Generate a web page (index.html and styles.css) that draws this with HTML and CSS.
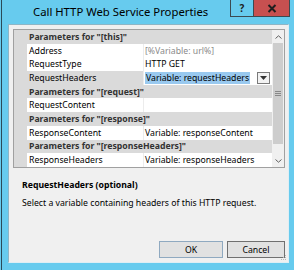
FILE: index.html
```html
<!DOCTYPE html>
<html>
<head>
<meta charset="utf-8">
<link rel="stylesheet" href="styles.css">
</head>
<body>
<div class="window">
  <div class="titlebar">
    <div class="title">Call HTTP Web Service Properties</div>
    <div class="caption-btns">
      <div class="cbtn help">?</div>
      <div class="cbtn close">
        <svg width="10" height="9" viewBox="0 0 10 9"><path d="M1.5 1 L8.5 8 M8.5 1 L1.5 8" stroke="#1e1e1e" stroke-width="2"/></svg>
      </div>
    </div>
  </div>
  <div class="client">
    <div class="grid">
      <div class="rows">
        <div class="row cat"><span class="gut"></span><span class="cat-text">Parameters for "[this]"</span></div>
        <div class="row"><span class="gut"></span><span class="name">Address</span><span class="val dim">[%Variable: url%]</span></div>
        <div class="row"><span class="gut"></span><span class="name">RequestType</span><span class="val">HTTP GET</span></div>
        <div class="row sel"><span class="gut"></span><span class="name">RequestHeaders</span><span class="val"><span class="hl">Variable: requestHeaders</span><span class="dd"><svg width="7" height="4" viewBox="0 0 7 4"><path d="M0 0 H7 L3.5 4 Z" fill="#333"/></svg></span></span></div>
        <div class="row cat"><span class="gut"></span><span class="cat-text">Parameters for "[request]"</span></div>
        <div class="row"><span class="gut"></span><span class="name">RequestContent</span><span class="val"></span></div>
        <div class="row cat"><span class="gut"></span><span class="cat-text">Parameters for "[response]"</span></div>
        <div class="row"><span class="gut"></span><span class="name">ResponseContent</span><span class="val">Variable: responseContent</span></div>
        <div class="row cat"><span class="gut"></span><span class="cat-text">Parameters for "[responseHeaders]"</span></div>
        <div class="row"><span class="gut"></span><span class="name">ResponseHeaders</span><span class="val">Variable: responseHeaders</span></div>
      </div>
      <div class="scrollbar">
        <div class="sb-arrow"><svg width="7" height="4" viewBox="0 0 7 4"><path d="M0.5 3.5 L3.5 0.8 L6.5 3.5" fill="none" stroke="#606060" stroke-width="1"/></svg></div>
        <div class="sb-thumb"><div class="grip"></div></div>
        <div class="sb-track"></div>
        <div class="sb-arrow"><svg width="7" height="4" viewBox="0 0 7 4"><path d="M0.5 0.5 L3.5 3.2 L6.5 0.5" fill="none" stroke="#606060" stroke-width="1"/></svg></div>
      </div>
    </div>
    <div class="desc">
      <div class="desc-title">RequestHeaders (optional)</div>
      <div class="desc-text">Select a variable containing headers of this HTTP request.</div>
    </div>
    <div class="buttons">
      <div class="btn ok">OK</div>
      <div class="btn cancel">Cancel</div>
    </div>
    <div class="sizegrip">
      <svg width="6" height="6" viewBox="0 0 6 6"><g fill="#b8b8b8"><rect x="4" y="0" width="1" height="1"/><rect x="2" y="2" width="1" height="1"/><rect x="4" y="2" width="1" height="1"/><rect x="0" y="4" width="1" height="1"/><rect x="2" y="4" width="1" height="1"/><rect x="4" y="4" width="1" height="1"/></g></svg>
    </div>
  </div>
</div>
</body>
</html>
```
FILE: styles.css
```css
html, body {
  margin: 0;
  padding: 0;
}
body {
  width: 294px;
  height: 270px;
  overflow: hidden;
  font-family: "Noto Sans", "Open Sans", sans-serif;
  color: #000;
}
.window {
  width: 294px;
  height: 270px;
  background: linear-gradient(to right, #67cbee 1px, #2a4a58 1px, #2a4a58 2px, #67cbee 2px);
  display: flex;
  flex-direction: column;
}
.titlebar {
  height: 24px;
  display: flex;
  align-items: flex-start;
}
.title {
  font-size: 11.3px;
  line-height: 24px;
  padding-left: 33px;
  white-space: nowrap;
}
.caption-btns {
  margin-left: auto;
  margin-right: 4px;
  display: flex;
}
.cbtn {
  height: 16px;
  border: 1px solid #3b4a52;
  border-top: none;
  display: flex;
  align-items: center;
  justify-content: center;
}
.help {
  width: 22px;
  border-right: none;
  background: #67cbee;
  font-weight: bold;
  font-size: 10px;
  color: #1e1e1e;
}
.close {
  width: 35px;
  background: #c75050;
}
.client {
  margin-left: 8px;
  width: 279px;
  height: 237px;
  background: #f0f0f0;
  border: 1px solid #8eb6c6;
  border-bottom-color: #dfeef4;
  border-right-color: #dfeef4;
  position: relative;
  display: flex;
  flex-direction: column;
}
.grid {
  margin: 4px 0 0 4px;
  width: 270px;
  height: 137px;
  border: 1px solid #a0a0a0;
  background: #fff;
  display: flex;
}
.rows {
  width: 258px;
  display: flex;
  flex-direction: column;
}
.row {
  height: 13.7px;
  display: flex;
  align-items: center;
  font-size: 8.7px;
  white-space: nowrap;
  overflow: hidden;
}
.gut {
  width: 13px;
  align-self: stretch;
  background: #dadada;
  flex: none;
}
.name {
  width: 114px;
  padding-left: 2px;
  align-self: stretch;
  display: flex;
  align-items: center;
  border-right: 1px solid #ececec;
  flex: none;
}
.val {
  flex: 1;
  padding-left: 1px;
  align-self: stretch;
  display: flex;
  align-items: center;
}
.dim {
  color: #8a8a8a;
}
.cat {
  background: #dadada;
  font-weight: bold;
  color: #333;
}
.cat-text {
  padding-left: 2px;
}
.sel .name {
  background: #dadada;
}
.hl {
  background: #99c9ef;
  padding: 0 1px;
  line-height: 12px;
}
.dd {
  margin-left: auto;
  margin-right: 2px;
  width: 11px;
  height: 10px;
  border: 1px solid #7a7a7a;
  background: #f2f2f2;
  display: flex;
  align-items: center;
  justify-content: center;
}
.scrollbar {
  width: 12px;
  background: #f0f0f0;
  display: flex;
  flex-direction: column;
}
.sb-arrow {
  height: 13px;
  display: flex;
  align-items: center;
  justify-content: center;
  background: #f0f0f0;
}
.sb-thumb {
  height: 101px;
  margin: 0 1px;
  background: #cdcdcd;
  display: flex;
  align-items: center;
  justify-content: center;
}
.grip {
  width: 6px;
  height: 5px;
  background: repeating-linear-gradient(to bottom, #888 0, #888 1px, transparent 1px, transparent 2px);
}
.sb-track {
  flex: 1;
}
.desc {
  padding: 10px 0 0 13px;
  height: 52px;
}
.desc-title {
  font-size: 8.7px;
  font-weight: bold;
  line-height: 14px;
}
.desc-text {
  font-size: 8.7px;
  line-height: 14px;
  margin-top: 4px;
}
.buttons {
  display: flex;
  justify-content: flex-end;
  gap: 4px;
  padding-right: 3px;
  margin-top: 11px;
}
.btn {
  height: 15px;
  border: 1px solid #adadad;
  background: #e1e1e1;
  font-size: 8.7px;
  display: flex;
  align-items: center;
  justify-content: center;
}
.ok {
  width: 62px;
  border-color: #8fa9c0;
}
.cancel {
  width: 56px;
  border-color: #707070;
}
.sizegrip {
  position: absolute;
  right: 1px;
  bottom: 1px;
  line-height: 0;
}
```
